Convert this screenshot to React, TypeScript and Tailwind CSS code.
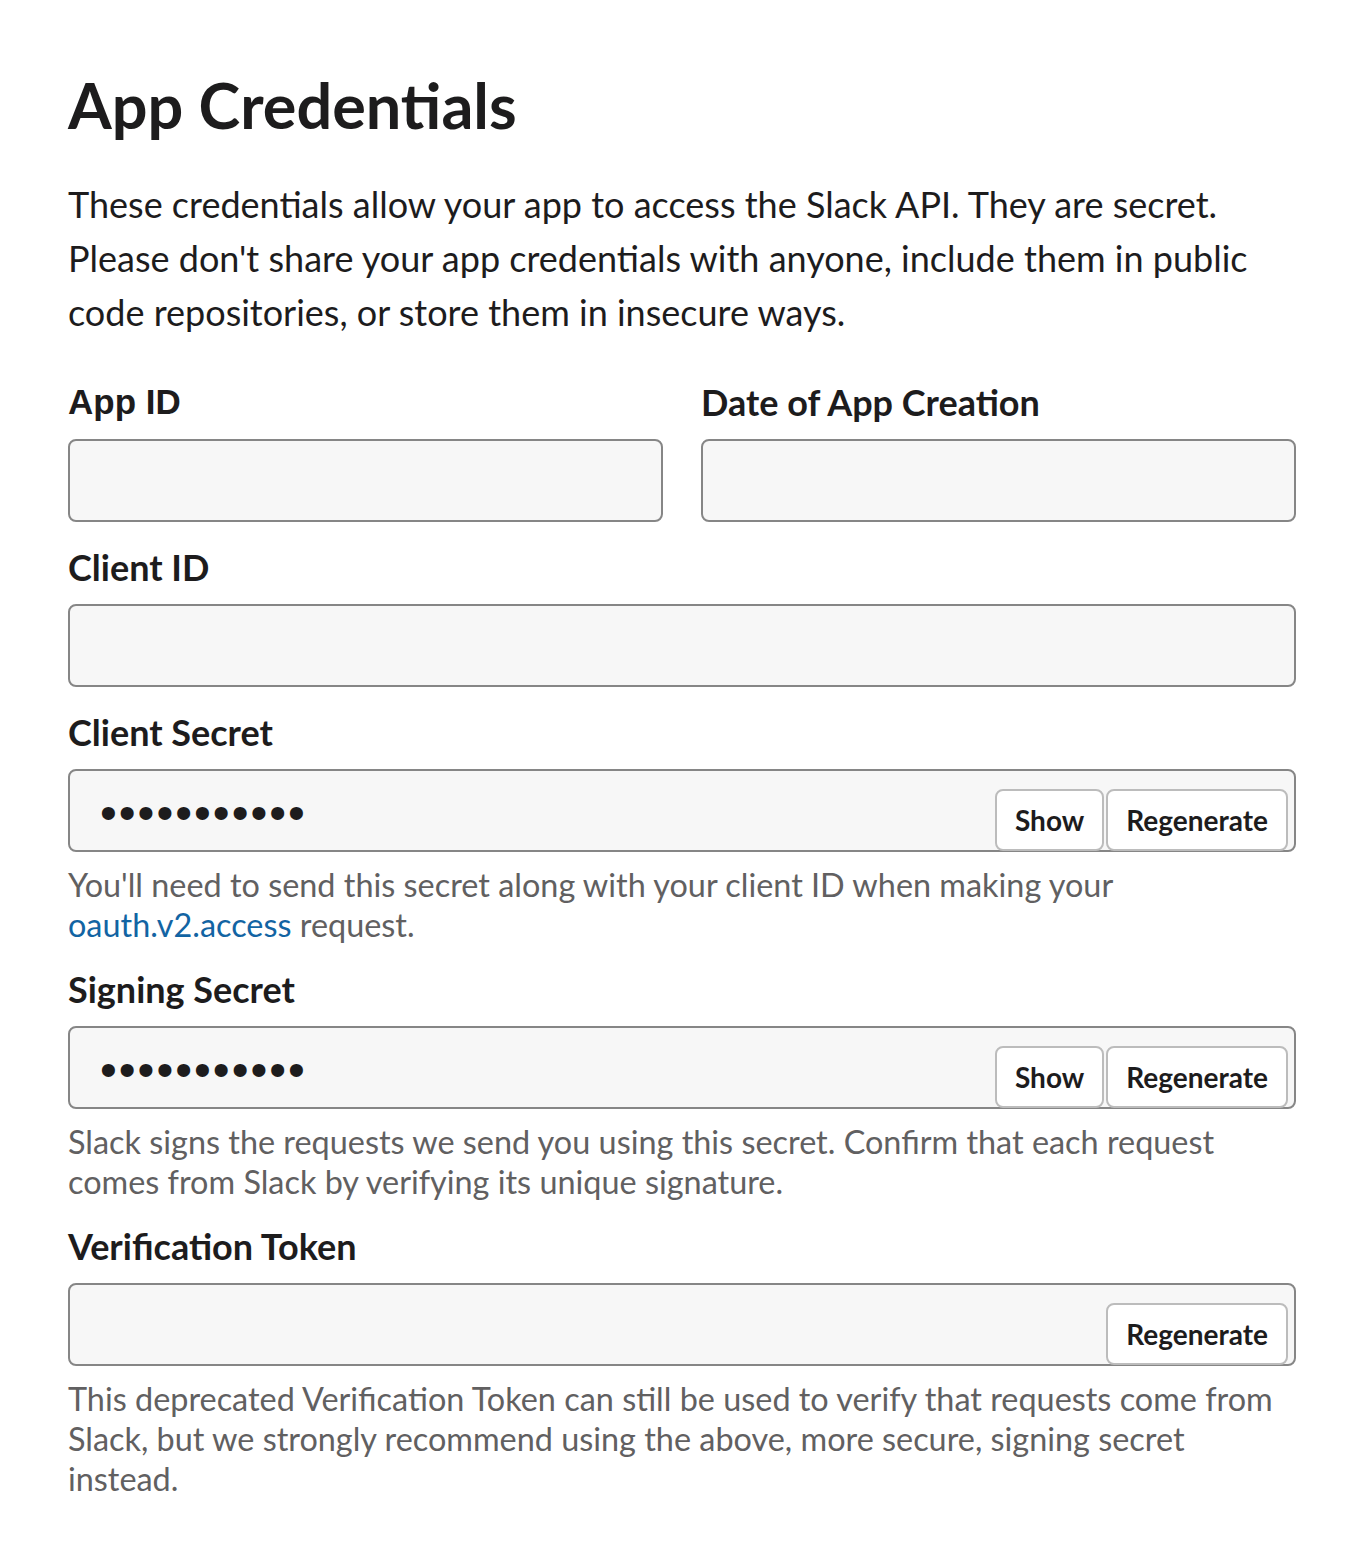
import React from "react";

const lato = { fontFamily: "Lato, 'Noto Sans', sans-serif" } as const;

function Label({ children, arial }: { children: React.ReactNode; arial?: boolean }) {
  return (
    <div
      className={`leading-[44px] font-bold text-[#1d1c1d] ${
        arial ? "font-['Liberation_Sans',Arial,sans-serif] text-[35px]" : "text-[36px]"
      }`}
    >
      {children}
    </div>
  );
}

function Btn({ children }: { children: React.ReactNode }) {
  return (
    <button
      type="button"
      className="-mb-px h-[62px] rounded-[8px] border-2 border-[#bcbcbc] bg-white px-[18px] text-[28px] font-bold leading-none text-[#1d1c1d]"
    >
      {children}
    </button>
  );
}

function Field({
  secret,
  show,
  regenerate,
}: {
  secret?: boolean;
  show?: boolean;
  regenerate?: boolean;
}) {
  return (
    <div className="mt-[15px] flex h-[83px] items-end rounded-[8px] border-2 border-[#868686] bg-[#f7f7f7] pl-[30px] pr-[6px]">
      {secret && (
        <span className="mt-[4px] self-center font-['Liberation_Sans',sans-serif] text-[48px] leading-none tracking-[2px] text-[#1d1c1d]">
          {"•".repeat(11)}
        </span>
      )}
      <div className="ml-auto flex gap-[2px]">
        {show && <Btn>Show</Btn>}
        {regenerate && <Btn>Regenerate</Btn>}
      </div>
    </div>
  );
}

function Help({ children }: { children: React.ReactNode }) {
  return <p className="mt-[13px] text-[32.4px] leading-[40px] text-[#616061]">{children}</p>;
}

export default function App() {
  return (
    <div className="min-h-[1542px] bg-white pl-[68px] pr-[70px] pt-[66px] pb-[40px] text-[#1d1c1d]" style={lato}>
      <h1 className="text-[63px] leading-[77px] font-bold">App Credentials</h1>
      <p className="mt-[34px] text-[36px] leading-[54px]">
        These credentials allow your app to access the Slack API. They are secret. Please don't share
        your app credentials with anyone, include them in public code repositories, or store them in
        insecure ways.
      </p>

      <div className="mt-[41px] grid grid-cols-2 gap-[38px]">
        <div>
          <Label arial>App ID</Label>
          <Field />
        </div>
        <div>
          <Label>Date of App Creation</Label>
          <Field />
        </div>
      </div>

      <div className="mt-[23px]">
        <Label>Client ID</Label>
        <Field />
      </div>

      <div className="mt-[23px]">
        <Label>Client Secret</Label>
        <Field secret show regenerate />
        <Help>
          You'll need to send this secret along with your client ID when making your{" "}
          <a className="text-[#1264a3]">oauth.v2.access</a> request.
        </Help>
      </div>

      <div className="mt-[22px]">
        <Label>Signing Secret</Label>
        <Field secret show regenerate />
        <Help>
          Slack signs the requests we send you using this secret. Confirm that each request comes from
          Slack by verifying its unique signature.
        </Help>
      </div>

      <div className="mt-[22px]">
        <Label>Verification Token</Label>
        <Field regenerate />
        <Help>
          This deprecated Verification Token can still be used to verify that requests come from Slack,
          but we strongly recommend using the above, more secure, signing secret instead.
        </Help>
      </div>
    </div>
  );
}
